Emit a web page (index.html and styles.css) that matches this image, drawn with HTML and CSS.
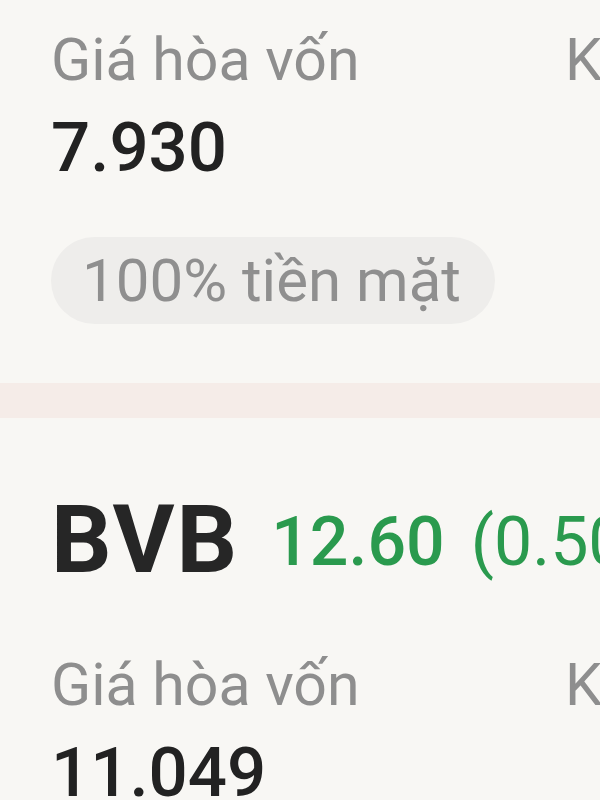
FILE: index.html
```html
<!DOCTYPE html>
<html lang="vi">
<head>
    <meta charset="UTF-8">
    <meta name="viewport" content="width=device-width, initial-scale=1.0">
    <title>Danh mục</title>
    <link rel="stylesheet" href="styles.css">
</head>
<body>
    <div class="card card-first">
        <div class="stats">
            <div class="stat">
                <div class="label">Giá hòa vốn</div>
                <div class="value">7.930</div>
            </div>
            <div class="stat">
                <div class="label">Khối lượng</div>
            </div>
        </div>
        <div class="pill">100% tiền mặt</div>
    </div>

    <div class="divider"></div>

    <div class="card card-second">
        <div class="header">
            <span class="ticker">BVB</span>
            <span class="price">12.60</span>
            <span class="change">(0.50%)</span>
        </div>
        <div class="stats stats-second">
            <div class="stat">
                <div class="label">Giá hòa vốn</div>
                <div class="value">11.049</div>
            </div>
            <div class="stat">
                <div class="label">Khối lượng</div>
            </div>
        </div>
    </div>
</body>
</html>
```

FILE: styles.css
```css
html, body {
    margin: 0;
    padding: 0;
}
body {
    font-family: Roboto, "Noto Sans", Arial, sans-serif;
    background: #f8f7f4;
    width: 600px;
    height: 800px;
    overflow: hidden;
}
.card {
    padding-left: 51px;
    white-space: nowrap;
}
.card-first {
    padding-top: 30px;
    padding-bottom: 59px;
}
.card-second {
    padding-top: 74px;
}
.stats {
    display: flex;
}
.stat {
    flex: 0 0 514px;
}
.label {
    font-size: 59px;
    line-height: 1;
    color: #8e8e8e;
}
.value {
    margin-top: 24px;
    font-size: 69px;
    line-height: 1;
    font-weight: 500;
    color: #222;
}
.pill {
    display: inline-block;
    margin-top: 55px;
    height: 87px;
    line-height: 87px;
    padding: 0 34px 0 31px;
    border-radius: 44px;
    background: #eeedeb;
    color: #8f8f8f;
    font-size: 60px;
}
.divider {
    height: 35px;
    background: #f5ece8;
}
.header {
    display: flex;
    align-items: center;
    line-height: 1;
}
.ticker {
    font-size: 95px;
    font-weight: 700;
    letter-spacing: 2px;
    color: #262626;
}
.price {
    margin-left: 32px;
    padding-top: 4px;
    font-size: 68px;
    font-weight: 500;
    color: #2a9a4e;
}
.change {
    margin-left: 26px;
    padding-top: 4px;
    font-size: 68px;
    color: #2a9a4e;
}
.stats-second {
    margin-top: 68px;
}
.stats-second .value {
    margin-top: 24px;
}
```
